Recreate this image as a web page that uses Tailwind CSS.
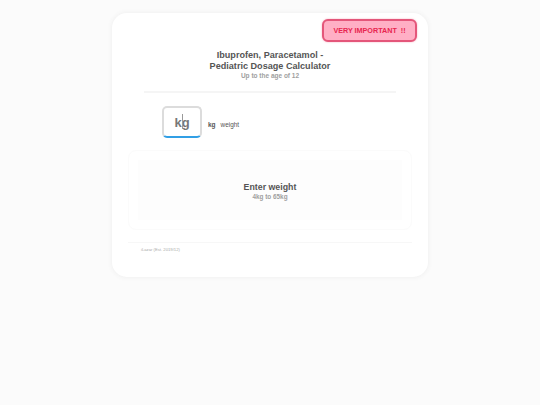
<!DOCTYPE html>
<html lang="en">
<head>
<meta charset="utf-8">
<title>Pediatric Dosage Calculator</title>
<script src="https://cdn.jsdelivr.net/npm/@tailwindcss/browser@4"></script>
</head>
<body class="h-screen overflow-hidden bg-[#fbfbfb] pt-[13px] font-['Liberation_Sans',Arial,sans-serif] text-[#555]">
<main class="relative mx-auto h-[264px] w-[316px] rounded-[15px] bg-white px-4 pt-[37px] shadow-[0_0_4px_1px_#f1f1f1]">
  <button class="absolute top-[6px] right-[11px] flex h-[23px] w-[95px] items-center justify-center rounded-[6px] border-2 border-[#e4567a] bg-[#ffafc5] pt-px text-[7.2px] font-bold whitespace-pre text-[#e8254f] shadow-[0_0_2px_#f7a8bb]">VERY IMPORTANT  !!</button>
  <header class="text-center font-bold">
    <h1 class="text-[9.1px] leading-[11px]">Ibuprofen, Paracetamol -<br>Pediatric Dosage Calculator</h1>
    <p class="text-[6.5px] leading-[7px] text-[#a0a0a0]">Up to the age of 12</p>
  </header>
  <div class="mx-4 mt-[12px] h-[2px] bg-[#f5f5f5]"></div>
  <div class="mt-[13px] flex items-center pl-[34px]">
    <div class="relative flex h-[32px] w-[40px] items-center justify-center rounded-[5px] border-2 border-[#dcdcdc] border-b-[#319fe5] bg-white pt-px text-[13px] font-bold text-[#777]">kg<span class="absolute top-[6px] left-[18px] h-[15px] w-px bg-[#999]"></span></div>
    <span class="mt-[5px] ml-[6px] text-[6.5px] leading-[8px] font-bold">kg</span>
    <span class="mt-[5px] ml-[5px] text-[6.4px] leading-[8px]">weight</span>
  </div>
  <section class="mt-[12px] h-[80px] rounded-[8px] border border-[#fbfbfb] p-[9px]">
    <div class="h-full bg-[#fdfdfd] pt-[22px] text-center font-bold">
      <h2 class="text-[8.8px] leading-[11px]">Enter weight</h2>
      <p class="text-[6.4px] leading-[7px] text-[#a0a0a0]">4kg to 65kg</p>
    </div>
  </section>
  <footer class="mt-[12px] border-t border-[#f7f7f7] pt-[4px] pl-[13px] text-[4.2px] leading-[5px] text-[#aaa]">iLazar (Est. 2019/12)</footer>
</main>
</body>
</html>
